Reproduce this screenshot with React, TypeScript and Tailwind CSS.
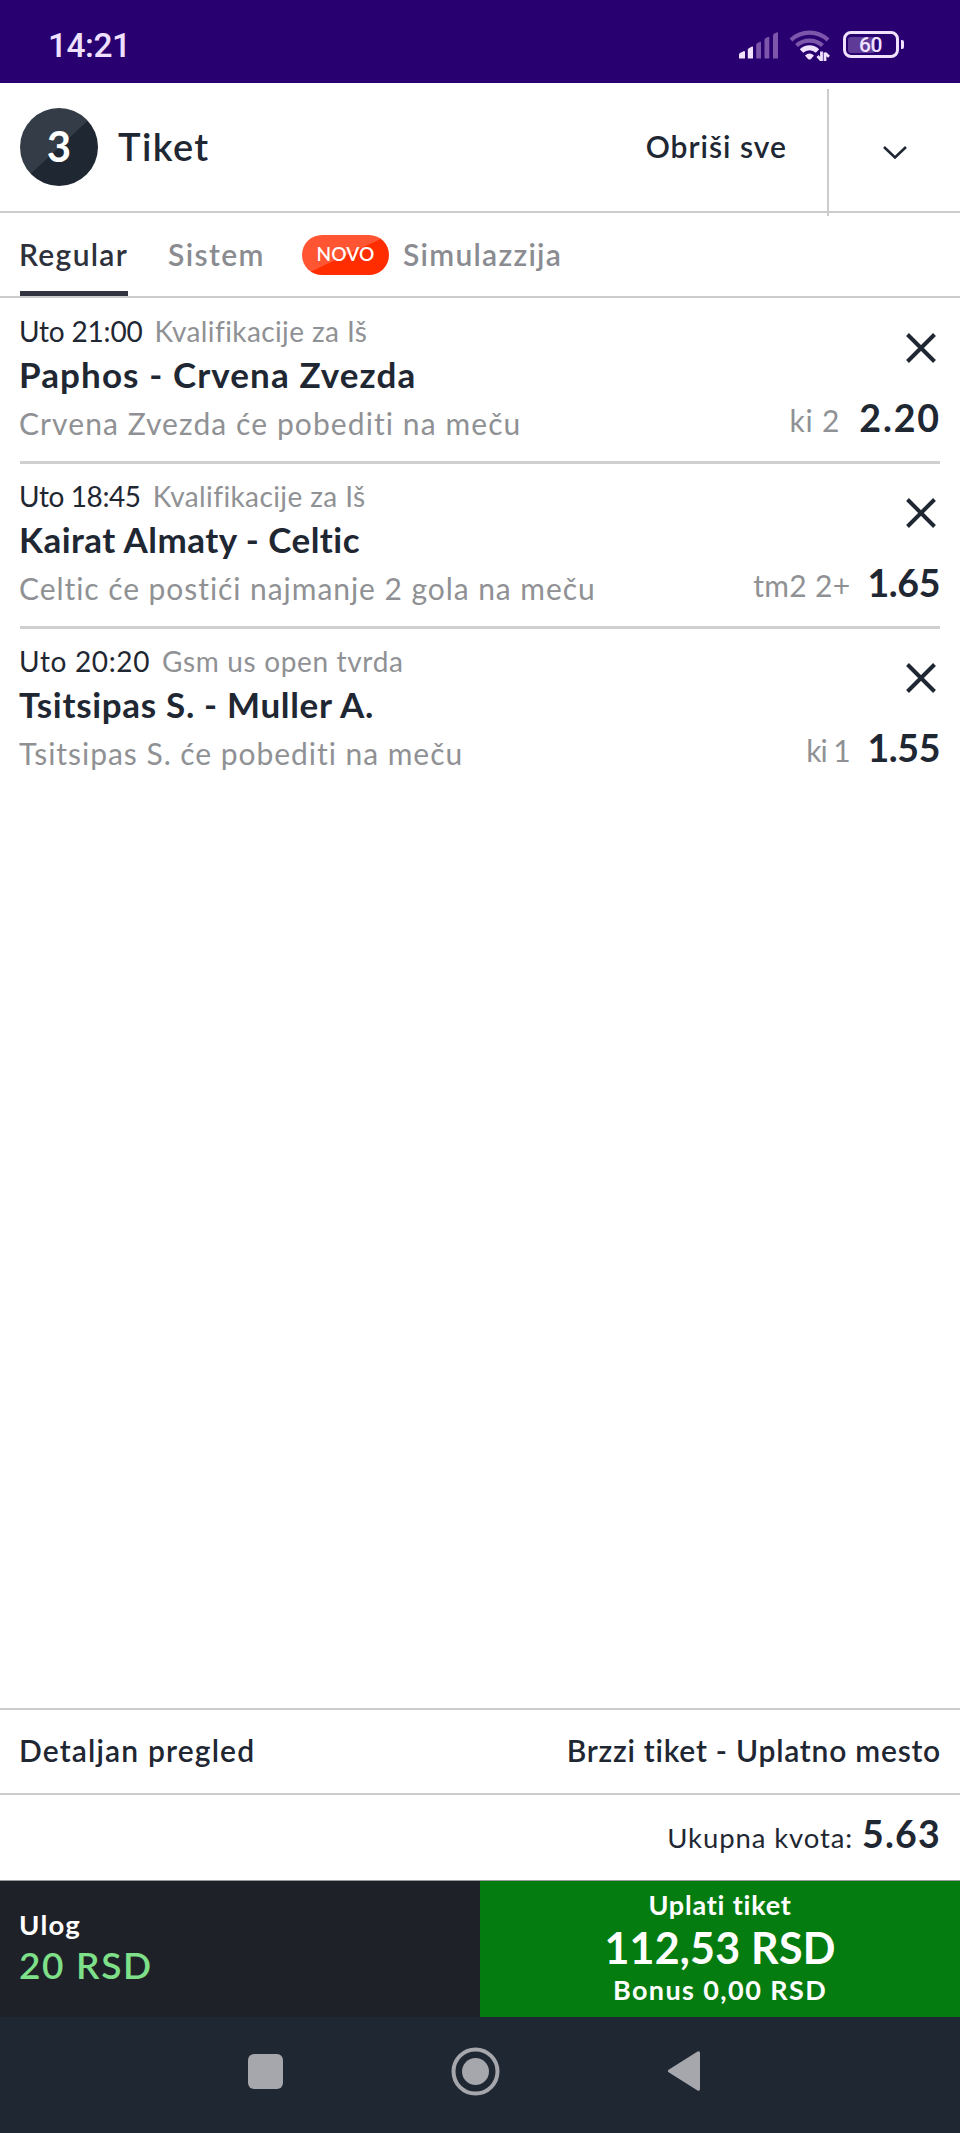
const FONT = "font-['Lato','Open_Sans',sans-serif]";

interface Pick {
  time: string;
  timeTracking: string;
  league: string;
  leagueTracking: string;
  match: string;
  matchTracking: string;
  tip: string;
  tipTracking: string;
  code: string;
  codeClass: string;
  odds: string;
  oddsClass: string;
}

const picks: Pick[] = [
  {
    time: "Uto 21:00",
    timeTracking: "tracking-[-0.2px]",
    league: "Kvalifikacije za Iš",
    leagueTracking: "tracking-[0.4px]",
    match: "Paphos - Crvena Zvezda",
    matchTracking: "tracking-[1.1px]",
    tip: "Crvena Zvezda će pobediti na meču",
    tipTracking: "tracking-[1.09px]",
    code: "ki 2",
    codeClass: "tracking-[0.8px] mr-[19px]",
    odds: "2.20",
    oddsClass: "tracking-[1.9px] -mr-[1px]",
  },
  {
    time: "Uto 18:45",
    timeTracking: "tracking-[-0.4px]",
    league: "Kvalifikacije za Iš",
    leagueTracking: "tracking-[0.4px]",
    match: "Kairat Almaty - Celtic",
    matchTracking: "tracking-[0.47px]",
    tip: "Celtic će postići najmanje 2 gola na meču",
    tipTracking: "tracking-[0.94px]",
    code: "tm2 2+",
    codeClass: "tracking-[0.3px] mr-[17px]",
    odds: "1.65",
    oddsClass: "tracking-[-0.4px]",
  },
  {
    time: "Uto 20:20",
    timeTracking: "tracking-[0.65px]",
    league: "Gsm us open tvrda",
    leagueTracking: "tracking-[0.65px]",
    match: "Tsitsipas S. - Muller A.",
    matchTracking: "tracking-[0.68px]",
    tip: "Tsitsipas S. će pobediti na meču",
    tipTracking: "tracking-[0.96px]",
    code: "ki 1",
    codeClass: "tracking-[-1.1px] mr-[18px]",
    odds: "1.55",
    oddsClass: "tracking-[-0.4px]",
  },
];

function SignalIcon() {
  return (
    <svg width="40" height="27" viewBox="0 0 40 27">
      <path d="M0 26v-3.500q0-1 1-1.500l4-2q1 0 1 1v6q0 .5-.5.5h-5q-.5 0-.5-.5z" fill="#f0e2ff" />
      <path d="M8.800 26v-8.300q0-1 1-1.500l3.200-1.700q1-.3 1 .7v10.800q0 .5-.5.5h-4.200q-.5 0-.5-.5z" fill="#f0e2ff" />
      <path d="M17.200 26v-13.300q0-1 1-1.500l2.800-1.400q1-.3 1 .7v15.500q0 .5-.5.500h-3.800q-.5 0-.5-.5z" fill="#7d55ab" />
      <path d="M25.500 26v-18.300q0-1 1-1.500l2.800-1.400q1-.3 1 .7v20.500q0 .5-.5.500h-3.800q-.5 0-.5-.5z" fill="#7d55ab" />
      <path d="M34 26v-22.800q0-1 1-1.500l3-1.400q1-.3 1 .7v25q0 .5-.5.500h-4q-.5 0-.5-.5z" fill="#7d55ab" />
    </svg>
  );
}

function WifiIcon() {
  return (
    <svg width="42" height="32" viewBox="0 0 42 32" fill="none">
      <path d="M2 11A27 27 0 0 1 39 11" stroke="#7d55ab" strokeWidth="4.200" />
      <path d="M7.500 16.500A19.500 19.500 0 0 1 33.500 16.500" stroke="#7d55ab" strokeWidth="4.200" />
      <path d="M12.500 22A11.500 11.500 0 0 1 28.500 22" stroke="#f0e2ff" strokeWidth="4.800" />
      <path d="M16 26.500q4.500-4 9 0l-3 3.400q-1.500 1.200-3 0z" fill="#f0e2ff" />
      <path d="M32.500 22.500v9.500M28.500 27l3.500 4M36 32v-8.500M36 24l4 3.700" stroke="#f0e2ff" strokeWidth="2.800" />
    </svg>
  );
}

function BatteryIcon() {
  return (
    <div className="flex items-center">
      <div className="flex h-[27px] w-[56px] rounded-[8px] border-[3px] border-[#f0e2ff] p-[2.500px]">
        <div className="h-full w-[27px] rounded-[3px] bg-[#5f3a97]">
          <div className="flex h-full w-[45px] items-center justify-center pt-px font-['Roboto',sans-serif] text-[21px] leading-none font-medium tracking-[-0.5px] text-[#f0e2ff]">
            60
          </div>
        </div>
      </div>
      <div className="ml-[2px] h-[9px] w-[3.500px] rounded-r-[2px] bg-[#f0e2ff]" />
    </div>
  );
}

function StatusBar() {
  return (
    <div className="flex h-[83px] shrink-0 items-start justify-between bg-[#290070] pr-[56px] pl-12">
      <div className="mt-[26px] font-['Roboto',sans-serif] text-[33.500px] leading-[40px] font-medium tracking-[-0.5px] text-[#efe0ff]">
        14:21
      </div>
      <div className="flex items-start">
        <div className="mt-[32px] mr-[10px]">
          <SignalIcon />
        </div>
        <div className="mt-[29px] mr-[12px]">
          <WifiIcon />
        </div>
        <div className="mt-[31px]">
          <BatteryIcon />
        </div>
      </div>
    </div>
  );
}

function Header() {
  return (
    <header className="flex h-[130px] shrink-0 border-b-2 border-[#cccccc]">
      <div className="flex flex-1 items-start">
        <div className="mt-[25px] ml-5 flex size-[78px] items-center justify-center rounded-full bg-[linear-gradient(137deg,#343c47_50%,#1f2733_50.500%)] pb-[2px] text-[42px] leading-none font-bold text-white">
          3
        </div>
        <h1 className="mt-[39px] ml-5 text-[38px] leading-[48px] font-semibold tracking-[1.400px]">
          Tiket
        </h1>
      </div>
      <button className="mt-[43px] mr-[40px] h-10 text-[30px] leading-[40px] font-semibold tracking-[1px]">
        Obriši sve
      </button>
      <div className="mt-[6px] -mb-[5px] flex w-[133px] items-start justify-center border-l-2 border-[#cccccc]">
        <svg className="mt-[56px]" width="26" height="16" viewBox="0 0 26 16" fill="none">
          <path d="M2 2l11 10.500L24 2" stroke="#1f2733" strokeWidth="2.600" />
        </svg>
      </div>
    </header>
  );
}

function Tabs() {
  return (
    <nav className="flex h-[85px] shrink-0 items-stretch border-b-2 border-[#cccccc] pl-5 text-[30px] leading-[40px] font-semibold text-[#8a8c91]">
      <div className="mr-[40px] w-[108px] border-b-[5px] border-[#31343f] pt-[21px] whitespace-nowrap text-[#2d313b]">
        <span className="-ml-px tracking-[1.300px]">Regular</span>
      </div>
      <div className="w-[134px] pt-[21px] tracking-[1.400px]">Sistem</div>
      <div className="mt-[22px] flex h-10 w-[87px] items-center justify-center rounded-full bg-[linear-gradient(155deg,#ff5533_50%,#ff2d00_51%)] pb-[3px] text-[19px] leading-none tracking-[0.2px] text-white">
        NOVO
      </div>
      <div className="ml-[14px] pt-[21px] tracking-[1.280px]">Simulazzija</div>
    </nav>
  );
}

function CloseIcon() {
  return (
    <svg width="30" height="30" viewBox="0 0 30 30" fill="none">
      <path d="M1.500 1.500l27 27M28.500 1.500l-27 27" stroke="#1f2733" strokeWidth="4" />
    </svg>
  );
}

function PickRow({ pick, last }: { pick: Pick; last: boolean }) {
  return (
    <li
      className={`mx-5 flex h-[165px] justify-between ${last ? "" : "border-b-[3px] border-[#cfcfcf]"}`}
    >
      <div className="-ml-px pt-3 whitespace-nowrap">
        <div className="flex h-10 text-[28px] leading-[40px]">
          <span className={`mr-3 ${pick.timeTracking}`}>{pick.time}</span>
          <span className={`text-[#8f9194] ${pick.leagueTracking}`}>{pick.league}</span>
        </div>
        <div className={`h-[47px] text-[35px] leading-[47px] font-bold ${pick.matchTracking}`}>
          {pick.match}
        </div>
        <div className={`h-[50px] text-[30px] leading-[50px] text-[#8f9194] ${pick.tipTracking}`}>
          {pick.tip}
        </div>
      </div>
      <div className="flex flex-col items-end pt-[34px]">
        <button className="mr-1 flex size-[30px]">
          <CloseIcon />
        </button>
        <div className="mt-[33px] flex h-[44px] items-baseline leading-[44px]">
          <span className={`text-[30px] text-[#8f9194] ${pick.codeClass}`}>{pick.code}</span>
          <span className={`text-[37.500px] font-bold ${pick.oddsClass}`}>{pick.odds}</span>
        </div>
      </div>
    </li>
  );
}

function Summary() {
  return (
    <>
      <div className="flex h-[87px] shrink-0 justify-between border-y-2 border-[#cccccc] px-5 pt-[18px] text-[30px] leading-[44px] font-semibold">
        <span className="-ml-px tracking-[1.150px]">Detaljan pregled</span>
        <span className="-mr-px tracking-[0.760px]">Brzzi tiket - Uplatno mesto</span>
      </div>
      <div className="flex h-[86px] shrink-0 items-baseline justify-end border-b border-[#999] pr-[19px] pt-[14px]">
        <span className="mr-[9px] text-[27.500px] leading-[50px] tracking-[0.890px]">Ukupna kvota:</span>
        <span className="text-[37.500px] leading-[50px] font-bold tracking-[1.200px]">5.63</span>
      </div>
    </>
  );
}

function PayBar() {
  return (
    <div className="grid h-[136px] shrink-0 grid-cols-2 font-semibold text-white">
      <div className="bg-[#1f2128] pt-[26px] pl-[19px]">
        <div className="text-[27.500px] leading-[36px] font-bold tracking-[1.200px]">Ulog</div>
        <div className="text-[37px] leading-[44px] tracking-[1.640px] text-[#7ee088]">20 RSD</div>
      </div>
      <button className="flex flex-col items-center bg-[#057c10] pt-[5px]">
        <span className="text-[27px] leading-[37px] font-bold tracking-[0.800px]">Uplati tiket</span>
        <span className="text-[43px] leading-[49px] font-bold tracking-[0.200px]">112,53 RSD</span>
        <span className="text-[27px] leading-[36px] font-bold tracking-[1.400px]">Bonus 0,00 RSD</span>
      </button>
    </div>
  );
}

function NavBar() {
  return (
    <div className="flex h-[116px] shrink-0 items-start bg-[#1f2733] pl-[248px]">
      <div className="mt-[37px] size-[35px] rounded-[6px] bg-[#a5a7ac]" />
      <svg className="mt-[30px] ml-[168px]" width="50" height="50" viewBox="0 0 50 50" fill="none">
        <circle cx="24.500" cy="24.500" r="22" stroke="#a5a7ac" strokeWidth="4" />
        <circle cx="24.500" cy="24.500" r="13.500" fill="#a5a7ac" />
      </svg>
      <svg className="mt-[33px] ml-[166px]" width="34" height="42" viewBox="0 0 34 42">
        <path d="M2 19.500L30.500 1.500Q33 .5 33 3V39Q33 41.500 30.500 40.500L2 22.500Q-.5 21 2 19.500z" fill="#a5a7ac" />
      </svg>
    </div>
  );
}

export default function App() {
  return (
    <div className={`flex h-[2133px] w-[960px] flex-col bg-white text-[#1f2733] ${FONT}`}>
      <StatusBar />
      <Header />
      <Tabs />
      <ul className="flex-1 pt-px">
        {picks.map((pick, i) => (
          <PickRow key={pick.match} pick={pick} last={i === picks.length - 1} />
        ))}
      </ul>
      <Summary />
      <PayBar />
      <NavBar />
    </div>
  );
}
